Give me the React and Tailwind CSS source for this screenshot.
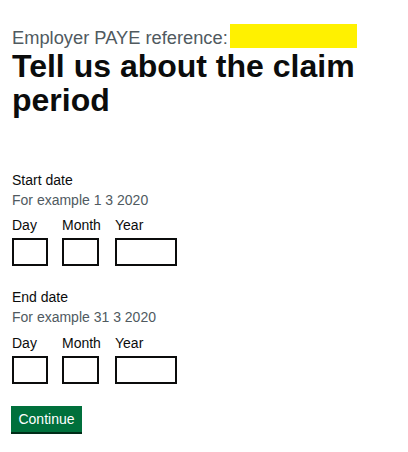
import React from "react";

function DateField({ label, hint, hintGap, topGap }) {
  return (
    <div className={topGap}>
      <div className="text-[14px] leading-[20px] text-[#0b0c0c]">{label}</div>
      <div className="text-[14px] leading-[20px] text-[#505a5f]">{hint}</div>
      <div className={`flex ${hintGap}`}>
        <div className="flex flex-col w-[50px]">
          <span className="text-[14px] leading-[20px] text-[#0b0c0c]">Day</span>
          <div className="mt-[3px] w-[36px] h-[28px] border-2 border-[#0b0c0c] bg-white"></div>
        </div>
        <div className="flex flex-col w-[53px]">
          <span className="text-[14px] leading-[20px] text-[#0b0c0c]">Month</span>
          <div className="mt-[3px] w-[37px] h-[28px] border-2 border-[#0b0c0c] bg-white"></div>
        </div>
        <div className="flex flex-col">
          <span className="text-[14px] leading-[20px] text-[#0b0c0c]">Year</span>
          <div className="mt-[3px] w-[62px] h-[28px] border-2 border-[#0b0c0c] bg-white"></div>
        </div>
      </div>
    </div>
  );
}

export default function App() {
  return (
    <div
      className="w-[408px] h-[452px] bg-white px-[12px] pt-[24px] overflow-hidden"
      style={{ fontFamily: '"Liberation Sans", Arial, sans-serif' }}
    >
      <div className="flex items-start h-[24px]">
        <span className="w-[218px] text-[18.3px] leading-[28px] text-[#505a5f] whitespace-nowrap">
          Employer PAYE reference:
        </span>
        <div className="w-[127px] h-[24px] bg-[#fff100]"></div>
      </div>
      <h1 className="mt-[1px] text-[32px] leading-[34px] font-bold text-[#0b0c0c]">
        Tell us about the claim period
      </h1>

      <DateField
        label="Start date"
        hint="For example 1 3 2020"
        hintGap="mt-[5px]"
        topGap="mt-[53px]"
      />
      <DateField
        label="End date"
        hint="For example 31 3 2020"
        hintGap="mt-[6px]"
        topGap="mt-[21px]"
      />

      <button className="mt-[22px] -ml-[1px] w-[71px] h-[26px] bg-[#00703c] text-white text-[14px] leading-[26px] text-center shadow-[0_2px_0_#002d18]">
        Continue
      </button>
    </div>
  );
}
